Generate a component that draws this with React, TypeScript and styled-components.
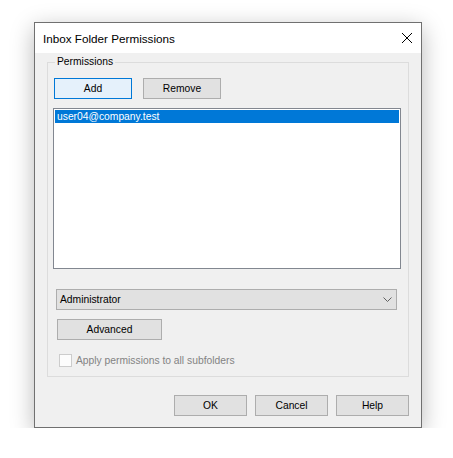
import styled, { createGlobalStyle } from "styled-components";

const GlobalStyle = createGlobalStyle`
  html, body {
    margin: 0;
    background: #fff;
  }
  body {
    font-family: "Liberation Sans", Arial, sans-serif;
    color: #000;
  }
  * {
    box-sizing: border-box;
  }
`;

const Window = styled.div`
  width: 388px;
  height: 406px;
  margin: 22px 0 0 34px;
  border: 1px solid #707070;
  background: #f0f0f0;
  display: flex;
  flex-direction: column;
  box-shadow: 0 6px 22px rgba(0, 0, 0, 0.28);
`;

const TitleBar = styled.div`
  height: 30px;
  background: #fff;
  display: flex;
  align-items: center;
  justify-content: space-between;
  padding: 0 9px 0 8px;
  font-size: 11.7px;
`;

const Client = styled.div`
  flex: 1;
  display: flex;
  flex-direction: column;
  padding: 2px 12px 0 12px;
`;

const Group = styled.fieldset`
  margin: 0;
  padding: 0 5px 9px;
  border: 1px solid #dcdcdc;
  min-width: 0;
`;

const Legend = styled.legend`
  padding: 0 2px;
  margin-left: 2px;
  font-size: 10.3px;
  line-height: 14px;
`;

const GroupBody = styled.div`
  display: flex;
  flex-direction: column;
  align-items: flex-start;
`;

const ButtonRow = styled.div`
  display: flex;
  gap: 11px;
  margin: 9px 0 0 1px;
`;

const Button = styled.button<{ $w: number; $focused?: boolean }>`
  width: ${(p) => p.$w}px;
  height: 21px;
  padding: 0;
  border: 1px solid ${(p) => (p.$focused ? "#0078d7" : "#adadad")};
  background: ${(p) => (p.$focused ? "#e5f1fb" : "#e1e1e1")};
  font-family: inherit;
  font-size: 10.3px;
  color: #000;
`;

const ListBox = styled.div`
  margin-top: 9px;
  width: 348px;
  height: 161px;
  border: 1px solid #828790;
  background: #fff;
  padding: 1px;
`;

const ListRow = styled.div<{ $selected?: boolean }>`
  height: 13px;
  line-height: 13px;
  padding-left: 2px;
  font-size: 10.3px;
  background: ${(p) => (p.$selected ? "#0078d7" : "transparent")};
  color: ${(p) => (p.$selected ? "#fff" : "#000")};
`;

const Combo = styled.div`
  margin: 20px 0 0 3px;
  width: 341px;
  height: 21px;
  border: 1px solid #adadad;
  background: #e1e1e1;
  display: flex;
  align-items: center;
  justify-content: space-between;
  padding: 0 4px 0 3px;
  font-size: 10.3px;
`;

const AdvancedButton = styled(Button)`
  margin: 9px 0 0 4px;
`;

const CheckRow = styled.label`
  display: flex;
  align-items: center;
  gap: 4px;
  margin: 14px 0 0 6px;
  font-size: 10.3px;
  color: #838383;
`;

const CheckBox = styled.span`
  width: 13px;
  height: 13px;
  border: 1px solid #cccccc;
  background: #fcfcfc;
`;

const Footer = styled.div`
  display: flex;
  justify-content: flex-end;
  gap: 8px;
  margin-top: 18px;
`;

const CloseIcon = () => (
  <svg width="10" height="10" viewBox="0 0 10 10">
    <path d="M0 0L10 10M10 0L0 10" stroke="#000" strokeWidth="1" />
  </svg>
);

const Chevron = () => (
  <svg width="9" height="5" viewBox="0 0 9 5">
    <polyline points="0.5,0.5 4.5,4.5 8.5,0.5" fill="none" stroke="#606060" strokeWidth="1" />
  </svg>
);

const App = () => {
  return (
    <>
      <GlobalStyle />
      <Window>
        <TitleBar>
          <span>Inbox Folder Permissions</span>
          <CloseIcon />
        </TitleBar>
        <Client>
          <Group>
            <Legend>Permissions</Legend>
            <GroupBody>
              <ButtonRow>
                <Button $w={78} $focused>Add</Button>
                <Button $w={78}>Remove</Button>
              </ButtonRow>
              <ListBox>
                <ListRow $selected>user04@company.test</ListRow>
              </ListBox>
              <Combo>
                <span>Administrator</span>
                <Chevron />
              </Combo>
              <AdvancedButton $w={105}>Advanced</AdvancedButton>
              <CheckRow>
                <CheckBox />
                Apply permissions to all subfolders
              </CheckRow>
            </GroupBody>
          </Group>
          <Footer>
            <Button $w={73}>OK</Button>
            <Button $w={73}>Cancel</Button>
            <Button $w={73}>Help</Button>
          </Footer>
        </Client>
      </Window>
    </>
  );
};

export default App;
